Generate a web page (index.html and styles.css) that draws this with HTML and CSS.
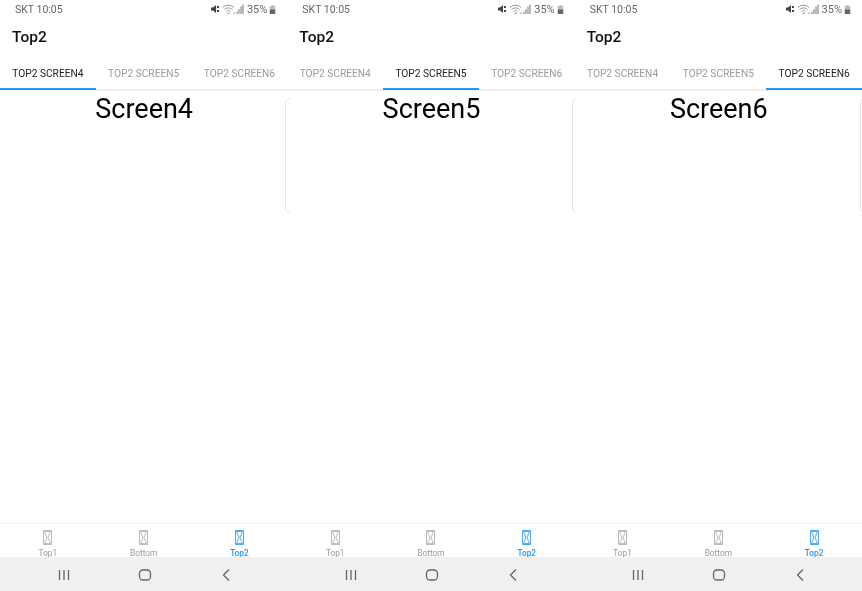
FILE: index.html
```html
<!DOCTYPE html>
<html lang="en">
<head>
<meta charset="utf-8">
<title>Top2 tabs</title>
<link rel="stylesheet" href="styles.css">
</head>
<body>
<svg class="defs" width="0" height="0" aria-hidden="true">
  <symbol id="tofu" viewBox="0 0 9 15">
    <path d="M.5.5h8v14h-8zM1.500 1.500h6L5 7.500l2.500 6h-6L4 7.500z" fill="none" stroke="currentColor" stroke-width=".8"/>
  </symbol>
  <symbol id="status" viewBox="0 0 33 10">
    <path d="M0 3.500h2L5 1v8L2 6.500H0z" fill="#444"/>
    <path d="M6 2l2 2M8 2L6 4M6 6l2 2M8 6L6 8" stroke="#444" stroke-width="1" fill="none"/>
    <path d="M12 3.500c3-3 8-3 11 0M13.500 5.500c2.200-2 5.800-2 8 0M15.500 7.300c1.200-1 2.800-1 4 0" stroke="#888" stroke-width=".9" fill="none"/>
    <path d="M16.800 8.500h1.500V10h-1.500zM22.500 8.500h1V10h-1z" fill="#888"/>
    <path d="M25.500 7.500h1V10h-1zM27.500 5h1v5h-1zM29.500 2.500h1V10h-1zM31.500.5h1V10h-1z" fill="#777"/>
  </symbol>
  <symbol id="battery" viewBox="0 0 7 10">
    <path d="M2.500 0h2v1h-2zM.5 1h6v9h-6z" fill="#bbb"/>
    <path d="M.5 5h6v5h-6z" fill="#666"/>
  </symbol>
</svg>
<main class="screens">
  <section class="phone">
    <div class="status"><span class="carrier">SKT 10:05</span><span class="sys"><svg class="sys-icons"><use href="#status"/></svg><span class="pct">35%</span><svg class="batt"><use href="#battery"/></svg></span></div>
    <header class="appbar">Top2</header>
    <nav class="tabs"><span class="tab on">TOP2 SCREEN4</span><span class="tab">TOP2 SCREEN5</span><span class="tab">TOP2 SCREEN6</span></nav>
    <div class="content"><h1 class="heading">Screen4</h1><div class="peek"></div></div>
    <nav class="bottom">
      <span class="item"><svg class="tofu"><use href="#tofu"/></svg>Top1</span>
      <span class="item"><svg class="tofu"><use href="#tofu"/></svg>Bottom</span>
      <span class="item on"><svg class="tofu"><use href="#tofu"/></svg>Top2</span>
    </nav>
    <div class="sysnav"><svg class="nav-ic" viewBox="0 0 14 14"><path d="M2.500 2v10M7 2v10M11.500 2v10"/></svg><svg class="nav-ic" viewBox="0 0 14 14"><rect x="1.500" y="2" width="11" height="10" rx="3.500"/></svg><svg class="nav-ic" viewBox="0 0 14 14"><path d="M10 1.500L4.500 7l5.500 5.500"/></svg></div>
  </section>
  <section class="phone">
    <div class="status"><span class="carrier">SKT 10:05</span><span class="sys"><svg class="sys-icons"><use href="#status"/></svg><span class="pct">35%</span><svg class="batt"><use href="#battery"/></svg></span></div>
    <header class="appbar">Top2</header>
    <nav class="tabs"><span class="tab">TOP2 SCREEN4</span><span class="tab on">TOP2 SCREEN5</span><span class="tab">TOP2 SCREEN6</span></nav>
    <div class="content"><h1 class="heading">Screen5</h1><div class="peek"></div></div>
    <nav class="bottom">
      <span class="item"><svg class="tofu"><use href="#tofu"/></svg>Top1</span>
      <span class="item"><svg class="tofu"><use href="#tofu"/></svg>Bottom</span>
      <span class="item on"><svg class="tofu"><use href="#tofu"/></svg>Top2</span>
    </nav>
    <div class="sysnav"><svg class="nav-ic" viewBox="0 0 14 14"><path d="M2.500 2v10M7 2v10M11.500 2v10"/></svg><svg class="nav-ic" viewBox="0 0 14 14"><rect x="1.500" y="2" width="11" height="10" rx="3.500"/></svg><svg class="nav-ic" viewBox="0 0 14 14"><path d="M10 1.500L4.500 7l5.500 5.500"/></svg></div>
  </section>
  <section class="phone">
    <div class="status"><span class="carrier">SKT 10:05</span><span class="sys"><svg class="sys-icons"><use href="#status"/></svg><span class="pct">35%</span><svg class="batt"><use href="#battery"/></svg></span></div>
    <header class="appbar">Top2</header>
    <nav class="tabs"><span class="tab">TOP2 SCREEN4</span><span class="tab">TOP2 SCREEN5</span><span class="tab on">TOP2 SCREEN6</span></nav>
    <div class="content"><h1 class="heading">Screen6</h1><div class="peek"></div></div>
    <nav class="bottom">
      <span class="item"><svg class="tofu"><use href="#tofu"/></svg>Top1</span>
      <span class="item"><svg class="tofu"><use href="#tofu"/></svg>Bottom</span>
      <span class="item on"><svg class="tofu"><use href="#tofu"/></svg>Top2</span>
    </nav>
    <div class="sysnav"><svg class="nav-ic" viewBox="0 0 14 14"><path d="M2.500 2v10M7 2v10M11.500 2v10"/></svg><svg class="nav-ic" viewBox="0 0 14 14"><rect x="1.500" y="2" width="11" height="10" rx="3.500"/></svg><svg class="nav-ic" viewBox="0 0 14 14"><path d="M10 1.500L4.500 7l5.500 5.500"/></svg></div>
  </section>
</main>
</body>
</html>
```
FILE: styles.css
```css
* { box-sizing: border-box; }
html, body { margin: 0; height: 100%; background: #fff; overflow: hidden; }
body { font-family: Roboto, "Liberation Sans", sans-serif; }
.defs { position: absolute; }
.screens { display: grid; grid-template-columns: repeat(3, 1fr); height: 591px; filter: blur(.4px); }
.phone { display: flex; flex-direction: column; min-width: 0; }

.status { height: 18px; display: flex; align-items: center; justify-content: space-between; padding: 0 11px 0 15px; font-size: 10.500px; color: #666; }
.sys { display: flex; align-items: center; gap: 2px; }
.sys-icons { width: 33px; height: 10px; margin-right: 1px; }
.batt { width: 7px; height: 9px; }
.pct { font-size: 11px; }

.appbar { height: 39px; display: flex; align-items: center; padding: 0 12px 1px; font-size: 15.500px; font-weight: 500; color: #111; }

.tabs { height: 34px; display: grid; grid-template-columns: repeat(3, 1fr); border-bottom: 2px solid #efefef; }
.tab { display: flex; align-items: center; justify-content: center; height: 33px; padding-top: 2px; font-size: 10.200px; color: #9a9a9a; white-space: nowrap; border-bottom: 2px solid transparent; }
.tab.on { color: #222; border-bottom-color: #2196f3; }

.content { flex: 1; position: relative; }
.heading { margin: 0; padding: 1px 0 0 1px; text-align: center; font-size: 27px; line-height: 34px; font-weight: 400; color: #000; }
.peek { position: absolute; left: 285px; top: 7px; width: 5px; height: 115px; border: 1.500px solid #e6e6e6; border-right: 0; border-radius: 5px 0 0 5px; }

.bottom { height: 34px; display: grid; grid-template-columns: repeat(3, 1fr); border-top: 1px solid #eee; padding: 6px 0 0; }
.item { display: flex; flex-direction: column; align-items: center; font-size: 8.300px; line-height: 9px; color: #999; }
.item.on { color: #2196f3; font-weight: 500; }
.tofu { width: 9px; height: 15px; margin-bottom: 4px; color: #aaa; }
.item.on .tofu { color: #2196f3; }

.sysnav { height: 34px; background: #f0f0f0; display: grid; grid-template-columns: repeat(3, 81px); justify-content: center; justify-items: center; align-items: center; padding: 1px 0 0 2px; }
.nav-ic { width: 14px; height: 14px; fill: none; stroke: #666; stroke-width: 1.300; }
```
